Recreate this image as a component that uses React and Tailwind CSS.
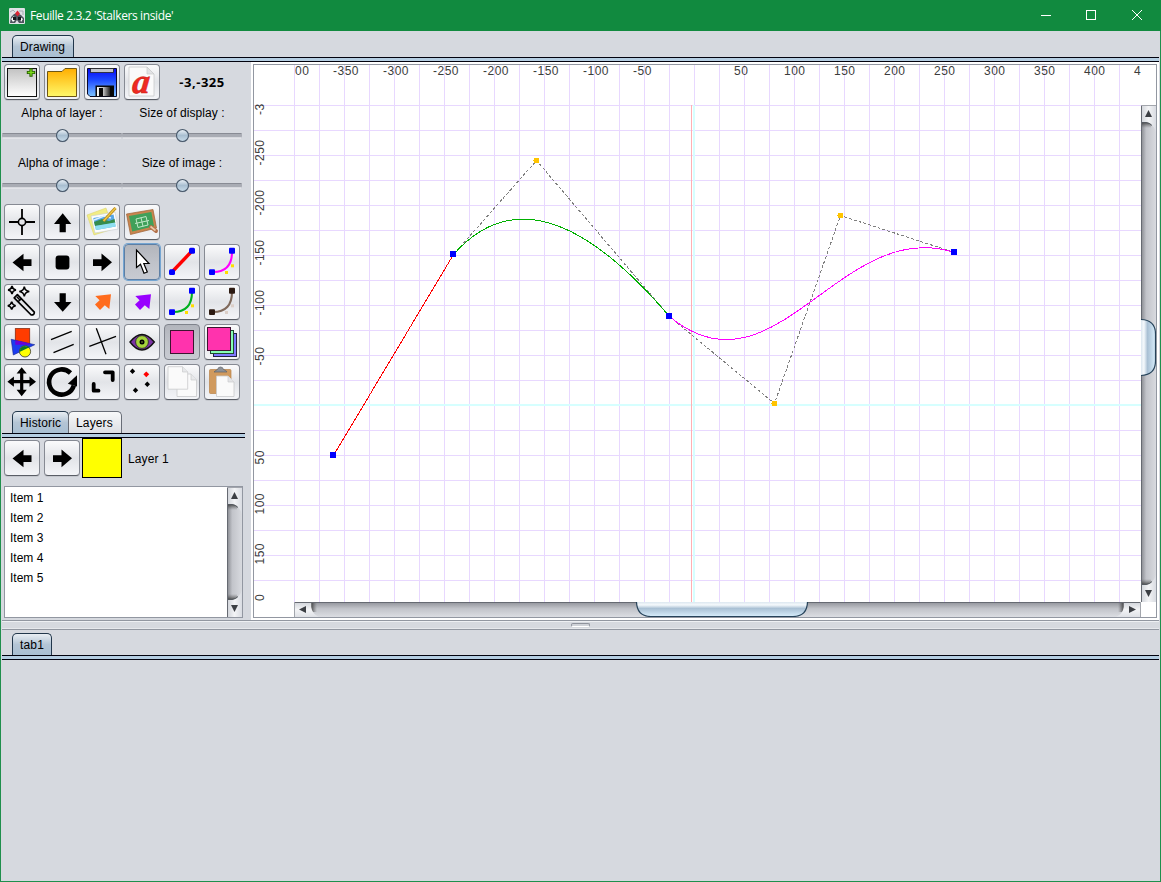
import React, { useId } from "react";

const BTN =
  "block h-[36px] w-[36px] rounded-[4px] border border-[#868a93] border-b-[#5a5e66] bg-linear-to-b from-[#fbfbfc] via-[#e2e4e8] to-[#f4f5f8] shadow-[0_1px_0_#c4c7cd]";
const BTN_ON =
  "block h-[36px] w-[36px] rounded-[4px] border border-[#7f838c] bg-linear-to-b from-[#b2b5bc] via-[#bfc2c9] to-[#c8cbd2]";
const BTN_FOCUS =
  "block h-[36px] w-[36px] rounded-[4px] border border-[#5d7fa5] bg-linear-to-b from-[#b2b5bc] via-[#bfc2c9] to-[#c8cbd2] shadow-[0_0_0_1px_#74a5d2]";

function ToolButton({ children, look = BTN, label }) {
  return (
    <div className="flex h-10 w-10 items-center justify-center">
      <button className={look} aria-label={label}>
        <svg viewBox="1 1 34 34" className="block h-[34px] w-[34px] overflow-visible" fill="none">
          {children}
        </svg>
      </button>
    </div>
  );
}

const page = { fill: "#fafafa", stroke: "#c9cacc", strokeWidth: 0.8 };
const LEFT = "M8.5 18.5 19.5 9.7V15.3H27.5V22H19.5V27.3Z";
const RIGHT = "M28 18.3 17.5 9.5V15.2H9V22H17.5V27.2Z";
const NE = "M27 10.3 11.3 12 15.6 16.3 11 20.5 16 26 20.8 21.2 25.3 25Z";

const star = (x, y, r) =>
  `M${x} ${y - r}Q${x + 0.6} ${y - 0.6} ${x + r} ${y}Q${x + 0.6} ${y + 0.6} ${x} ${y + r}Q${x - 0.6} ${y + 0.6} ${x - r} ${y}Q${x - 0.6} ${y - 0.6} ${x} ${y - r}Z`;

function Curve({ stroke, ends, dots }) {
  return (
    <>
      <path d="M28 8Q28 28 9 28" stroke={stroke} strokeWidth="2.1" />
      <rect x="25" y="3.8" width="6" height="6" rx="1" fill={ends} />
      <rect x="5" y="25.3" width="6" height="5.6" rx="1" fill={ends} />
      <rect x="27" y="20.3" width="3" height="3" fill={dots} />
      <rect x="21" y="27" width="3" height="3" fill={dots} />
    </>
  );
}

function FileButtons() {
  return (
    <>
      <ToolButton label="New">
        <defs>
          <linearGradient id="gNew" x2="0" y2="1"><stop stopColor="#c2c2c2" /><stop offset="1" stopColor="#fff" /></linearGradient>
          <linearGradient id="gOpen" x2="0" y2="1"><stop stopColor="#ffae00" /><stop offset="1" stopColor="#fff96a" /></linearGradient>
          <linearGradient id="gSave" x2="0" y2="1"><stop stopColor="#0808f4" /><stop offset=".4" stopColor="#1c48ff" /><stop offset="1" stopColor="#7cc4ff" /></linearGradient>
          <linearGradient id="gShut" x2="1" y2="0"><stop stopColor="#fff" /><stop offset=".5" stopColor="#bbb" /><stop offset="1" stopColor="#222" /></linearGradient>
        </defs>
        <rect x="3.5" y="4.5" width="29" height="28" fill="url(#gNew)" stroke="#111" />
        <path d="M27 4.3V12.7M22.8 8.5H31.2" stroke="#245c00" strokeWidth="3.2" />
        <path d="M27 5.2V11.8M23.7 8.5H30.3" stroke="#7edb1c" strokeWidth="1.4" />
      </ToolButton>
      <ToolButton label="Open">
        <path d="M3.5 32.5V7.5H18L21 4.5H32.5V32.5Z" fill="url(#gOpen)" stroke="#6e5614" />
      </ToolButton>
      <ToolButton label="Save">
        <path d="M3.5 4.5H32.5V32.5H6L3.5 30Z" fill="url(#gSave)" stroke="#0a0a28" />
        <rect x="6.5" y="4.5" width="23" height="4" fill="#c4c6cc" stroke="#222" strokeWidth=".8" />
        <rect x="11.5" y="21.5" width="18.5" height="11" fill="#080808" />
        <rect x="13" y="23" width="13" height="9" fill="url(#gShut)" />
        <rect x="15" y="24" width="4" height="8" fill="#090909" />
      </ToolButton>
      <ToolButton label="Export">
        <path d="M5 3H23L30 10V32H5Z" {...page} />
        <path d="M23 3V10H30Z" fill="#e2e3e5" stroke="#c9cacc" strokeWidth=".7" />
        <text transform="translate(7.5 28.5) skewX(-6) scale(1.12 1.12)" fontFamily="Liberation Serif, serif" fontStyle="italic" fontWeight="700" fontSize="31" fill="#ef2a22" stroke="#c81c16" strokeWidth=".5">a</text>
      </ToolButton>
    </>
  );
}

function ToolGrid() {
  return (
    <div className="grid grid-cols-[repeat(6,40px)]">
      <ToolButton label="Origin">
        <path d="M5 18H14M22 18H31M18 5V14M18 22V31" stroke="#000" strokeWidth="1.8" />
        <circle cx="18" cy="18" r="3.6" stroke="#000" strokeWidth="1.6" />
      </ToolButton>
      <ToolButton label="Up"><path d="M18.7 9.3 27.3 20H21.8V28.3H15.6V20H10Z" fill="#000" /></ToolButton>
      <ToolButton label="Image">
        <path d="M3 11 22 4 29 25 10 31Z" fill="#f1ec85" stroke="#d8d064" strokeWidth=".5" />
        <path d="M7 12 31 8 34 25 11 29Z" fill="#fdfdfd" stroke="#c6cbd2" strokeWidth=".6" />
        <path d="M9.3 14 29.6 10.5 31.6 22.5 12 26Z" fill="#57a6e8" />
        <path d="M10 18 18 15 25 17 30.5 15 31.3 19 11 22Z" fill="#358c4c" />
        <path d="M11 22 31 18.5 31.6 22.5 12 26Z" fill="#8edff0" />
        <path d="M10 16 20 12 27 14" stroke="#d9efff" strokeWidth="1.5" />
        <path d="M31.5 4 19.5 17" stroke="#b98716" strokeWidth="3" />
        <path d="M31.5 4 19.5 17" stroke="#f0c948" strokeWidth="1.3" />
      </ToolButton>
      <ToolButton label="Board">
        <path d="M2.5 10 29 5.5 32.5 24 6.5 30.5Z" fill="#c9854f" stroke="#9c6236" strokeWidth=".7" />
        <path d="M5 12 27.3 8 30 22.3 8.2 27.5Z" fill="#40a05a" />
        <path d="M12 15 22 12.5 24 21 14 23.5ZM17 13.7 19 22.3M11 19.5 25 16.5" stroke="#bfe8c8" strokeWidth="1" />
        <path d="M27 23 32 27" stroke="#b3704a" strokeWidth="4" strokeLinecap="round" />
        <path d="M26.5 22.5 31.5 26.5" stroke="#ecc9a8" strokeWidth="1.7" />
      </ToolButton>
      <div /><div />

      <ToolButton label="Left"><path d={LEFT} fill="#000" /></ToolButton>
      <ToolButton label="Center"><rect x="11.6" y="11.6" width="13.8" height="13.8" rx="3" fill="#000" /></ToolButton>
      <ToolButton label="Right"><path d={RIGHT} fill="#000" /></ToolButton>
      <ToolButton label="Select" look={BTN_FOCUS}>
        <path d="M12.5 6V23.5L16.5 20.2 20 29.2 23.3 28 19.8 19.5H25Z" fill="#fff" stroke="#000" strokeWidth="1.2" />
      </ToolButton>
      <ToolButton label="Line">
        <path d="M28 7 8 28" stroke="#f00" strokeWidth="3.4" />
        <rect x="25" y="3.8" width="6" height="6" rx="1.5" fill="#00f" />
        <rect x="5" y="25.3" width="6" height="5.6" rx="1.5" fill="#00f" />
      </ToolButton>
      <ToolButton label="Cubic curve"><Curve stroke="#f0f" ends="#00f" dots="#fd0" /></ToolButton>

      <ToolButton label="Wand">
        <path d={star(8, 6, 4)} stroke="#000" strokeWidth="1.5" />
        <path d={star(20.3, 7.5, 5)} stroke="#000" strokeWidth="1.6" />
        <path d={star(7.7, 21.7, 4)} stroke="#000" strokeWidth="1.5" />
        <path d="M10.2 13.8 13.4 10.6 30.3 28.2Q30.6 31 27.2 31Z" stroke="#000" strokeWidth="1.7" strokeLinejoin="round" />
        <path d="M14 17.8 17.5 14.6M12.8 12.8 16 16" stroke="#000" strokeWidth="1.5" />
      </ToolButton>
      <ToolButton label="Down"><path d="M18.7 27.7 27.5 18H21.8V9.3H15.6V18H10Z" fill="#000" /></ToolButton>
      <ToolButton label="Orange arrow"><path d={NE} fill="#ff6b1c" /></ToolButton>
      <ToolButton label="Purple arrow"><path d={NE} fill="#90f" /></ToolButton>
      <ToolButton label="Quadratic curve"><Curve stroke="#00b020" ends="#00f" dots="#fd0" /></ToolButton>
      <ToolButton label="Brown curve"><Curve stroke="#806a5c" ends="#2c1a12" dots="#dccfc8" /></ToolButton>

      <ToolButton label="Shapes">
        <rect x="11.3" y="4.6" width="14.4" height="16" fill="#ff3c00" stroke="#8c2a10" strokeWidth=".8" />
        <path d="M7.2 15.3 30.7 20.7 9.3 31Z" fill="#1c3cf0" stroke="#10208c" strokeWidth=".6" />
        <path d="M11.3 16.3 25.7 19.6V20.7H11.3Z" fill="#6a00d8" />
        <circle cx="21" cy="27.4" r="5.6" fill="#ff0" stroke="#333" strokeWidth=".8" />
        <path d="M15.5 28 16.5 24 20 22 26 23Z" fill="#0a7a28" />
      </ToolButton>
      <ToolButton label="Parallel"><path d="M7 15.7 27.7 7.3M9.5 28.7 29.7 20.3" stroke="#000" strokeWidth="1.3" /></ToolButton>
      <ToolButton label="Intersection"><path d="M5.3 22.3 32 12.3M12.3 4.3 22 30.3" stroke="#000" strokeWidth="1.3" /></ToolButton>
      <ToolButton label="View">
        <path d="M6 18Q12 10.5 18 10.5T30.3 18Q24 26 18 26T6 18Z" fill="#7b33a4" stroke="#111" strokeWidth="1.4" />
        <circle cx="18" cy="18" r="6.4" fill="#a5d33c" stroke="#222" strokeWidth=".8" />
        <circle cx="18" cy="18" r="2.5" fill="#000" />
        <circle cx="18" cy="18" r=".7" fill="#a5d33c" />
      </ToolButton>
      <ToolButton label="Layer" look={BTN_ON}><rect x="6.5" y="6.5" width="23" height="23" fill="#ff33ad" stroke="#3c1430" /></ToolButton>
      <ToolButton label="All layers">
        <rect x="9.5" y="9.5" width="23" height="23" fill="#8078ff" stroke="#222244" />
        <rect x="6.5" y="6.5" width="23" height="23" fill="#86ffb4" stroke="#1c4a30" />
        <rect x="3.5" y="3.5" width="23" height="23" fill="#ff33ad" stroke="#3c1430" />
      </ToolButton>

      <ToolButton label="Move">
        <path d="M17.7 3.2 22.8 9.6H19.3V16.1H25.5V12.6L32 17.7 25.5 22.8V19.3H19.3V25.8H22.8L17.7 32.2 12.6 25.8H16.1V19.3H9.9V22.8L3.4 17.7 9.9 12.6V16.1H16.1V9.6H12.6Z" fill="#000" />
      </ToolButton>
      <ToolButton label="Rotate">
        <path d="M26.5 9A12.6 12.6 0 1 0 29.8 21.5" stroke="#000" strokeWidth="4.6" />
        <path d="M33 11.2V22.5L23.8 19.8Z" fill="#000" />
      </ToolButton>
      <ToolButton label="Resize"><path d="M21 8.3H28.7V16M9.7 20V26.7H14.5" stroke="#000" strokeWidth="3.8" strokeLinecap="round" strokeLinejoin="round" /></ToolButton>
      <ToolButton label="Points">
        <path d="M8.5 4.6 11.2 7.3 8.5 10 5.8 7.3ZM23.3 17.6 26 20.3 23.3 23 20.6 20.3ZM11.5 23.6 14.2 26.3 11.5 29 8.8 26.3Z" fill="#000" />
        <path d="M22.3 7.4 25.2 10.3 22.3 13.2 19.4 10.3Z" fill="#f00" />
      </ToolButton>
      <ToolButton label="Copy">
        <path d="M13 10H27L32.5 16V32.5H13Z" {...page} />
        <path d="M27 10V16H32.5" fill="#e7e8ea" stroke="#c9cacc" strokeWidth=".7" />
        <path d="M4 2.7H18.5L23.7 8V25.2H4Z" {...page} />
        <path d="M18.5 2.7V8H23.7" fill="#e7e8ea" stroke="#c9cacc" strokeWidth=".7" />
      </ToolButton>
      <ToolButton label="Paste">
        <rect x="5.5" y="5.5" width="21.5" height="24" rx="1" fill="#d09a5e" stroke="#b98248" strokeWidth=".7" />
        <path d="M10 8Q12 6 13.5 5.5 14 3 16.5 3T19.5 5.5Q22 6 23 8Z" fill="#8d9196" stroke="#5e6267" strokeWidth=".7" />
        <path d="M12.5 12H24L30 18V32.5H12.5Z" {...page} />
        <path d="M24 12V18H30" fill="#e3e4e6" stroke="#c9cacc" strokeWidth=".7" />
      </ToolButton>
    </div>
  );
}

function Slider({ label }) {
  return (
    <div className="flex h-[50px] w-[120px] flex-col items-center">
      <div className="h-[23px] whitespace-nowrap text-[12px] leading-[23px] tracking-[0.08px]">{label}</div>
      <svg className="block h-[20px] w-[120px]" viewBox="0 0 120 20">
        <rect x="0" y="8" width="120" height="4.5" rx="1.5" fill="#a9acb4" />
        <path d="M.5 8.5H119.5" stroke="#888b94" />
        <path d="M1 13H119" stroke="#eff0f3" />
        <circle cx="60.5" cy="11" r="6.5" fill="#c2c5cc" />
        <circle cx="60.5" cy="10.5" r="6" fill="url(#knob)" stroke="#48596b" strokeWidth="1.1" />
      </svg>
    </div>
  );
}

function TabStrip({ tabs, height }) {
  return (
    <div className={`flex flex-col ${height}`}>
      <div className="flex flex-1 items-end pl-[10px]">
        {tabs.map((t) => (
          <div
            key={t.name}
            className={
              t.on
                ? `h-[22px] whitespace-nowrap rounded-t-[5px] border border-b-0 border-[#22374b] bg-linear-to-b from-[#e9eef3] via-[#b4c5d5] to-[#a9bfd2] pl-[7px] text-[12px] leading-[22px] tracking-[0.15px] ${t.size}`
                : `-ml-px h-[22px] whitespace-nowrap rounded-t-[5px] border border-b-0 border-[#686d77] bg-linear-to-b from-[#f8f9fa] to-[#dcdfe4] pl-[7px] text-[12px] leading-[22px] tracking-[0.15px] ${t.size}`
            }
          >
            {t.name}
          </div>
        ))}
      </div>
      <div className="h-[5px] shrink-0 border-y border-[#02020e] bg-[#b5cee2]" />
    </div>
  );
}

function VScroll({ length, thumb, className }) {
  const id = useId();
  return (
    <svg width="15" height={length} viewBox={`0 0 15 ${length}`} className={className}>
      <defs>
        <linearGradient id={id + "t"}><stop stopColor="#85878d" /><stop offset=".35" stopColor="#c2c4ca" /><stop offset="1" stopColor="#d8dadf" /></linearGradient>
        <linearGradient id={id + "b"}><stop stopColor="#cfd2d8" /><stop offset=".5" stopColor="#f3f4f6" /><stop offset="1" stopColor="#d9dce2" /></linearGradient>
        <linearGradient id={id + "h"}><stop stopColor="#dce7f0" /><stop offset=".2" stopColor="#f5f9fc" /><stop offset=".45" stopColor="#a9c0d4" /><stop offset="1" stopColor="#d8eefc" /></linearGradient>
        <linearGradient id={id + "s"} x2="0" y2="1"><stop stopColor="#222" stopOpacity=".8" /><stop offset="1" stopColor="#555" stopOpacity="0" /></linearGradient>
        <linearGradient id={id + "u"} x2="0" y2="1"><stop stopColor="#555" stopOpacity="0" /><stop offset="1" stopColor="#222" stopOpacity=".8" /></linearGradient>
      </defs>
      <rect width="15" height={length} fill={`url(#${id}t)`} />
      <rect y="17" width="10" height="6" fill={`url(#${id}s)`} />
      <rect y={length - 23} width="10" height="6" fill={`url(#${id}u)`} />
      <path d="M0 0H15V27Q12 18 5 17.3H0Z" fill={`url(#${id}b)`} />
      <path d={`M0 ${length}H15V${length - 27}Q12 ${length - 18} 5 ${length - 17.3}H0Z`} fill={`url(#${id}b)`} />
      <path d={`M.5 0V${length}`} stroke="#666a72" />
      <path d="M0 .5H15" stroke="#a3a6ad" />
      <path d="M1 17.5H5Q9 18 11 20.5" stroke="#555a60" fill="none" />
      <path d={`M1 ${length - 17.5}H5Q9 ${length - 18} 11 ${length - 20.5}`} stroke="#555a60" fill="none" />
      <path d="M4 12 7.5 5 11 12Z" fill="#3c3f44" />
      <path d={`M4 ${length - 12} 7.5 ${length - 5} 11 ${length - 12}Z`} fill="#3c3f44" />
      {thumb && (
        <path d={`M0 ${thumb[0] + 0.5}Q14.5 ${thumb[0] + 1} 14.5 ${thumb[0] + 15}V${thumb[1] - 15}Q14.5 ${thumb[1] - 1} 0 ${thumb[1] - 0.5}`} fill={`url(#${id}h)`} stroke="#26435a" strokeWidth="1.2" />
      )}
    </svg>
  );
}

function HScroll({ length, thumb }) {
  return (
    <svg width={length} height="15" viewBox={`0 0 ${length} 15`} className="block shrink-0">
      <defs>
        <linearGradient id="hsT" x2="0" y2="1"><stop stopColor="#909299" /><stop offset=".45" stopColor="#c2c4ca" /><stop offset="1" stopColor="#dbdde2" /></linearGradient>
        <linearGradient id="hsB" x2="0" y2="1"><stop stopColor="#cfd2d8" /><stop offset=".5" stopColor="#f3f4f6" /><stop offset="1" stopColor="#dfe1e6" /></linearGradient>
        <linearGradient id="hsH" x2="0" y2="1"><stop stopColor="#dce7f0" /><stop offset=".2" stopColor="#f5f9fc" /><stop offset=".45" stopColor="#a9c0d4" /><stop offset="1" stopColor="#d8eefc" /></linearGradient>
        <linearGradient id="hsL"><stop stopColor="#222" stopOpacity=".8" /><stop offset="1" stopColor="#555" stopOpacity="0" /></linearGradient>
        <linearGradient id="hsR"><stop stopColor="#555" stopOpacity="0" /><stop offset="1" stopColor="#222" stopOpacity=".8" /></linearGradient>
      </defs>
      <rect width={length} height="15" fill="url(#hsT)" />
      <rect x="17" width="6" height="10" fill="url(#hsL)" />
      <rect x={length - 23} width="6" height="10" fill="url(#hsR)" />
      <path d="M0 0V15H25Q18 12 17.3 5V0Z" fill="url(#hsB)" />
      <path d={`M${length} 0V15H${length - 25}Q${length - 18} 12 ${length - 17.3} 5V0Z`} fill="url(#hsB)" />
      <path d={`M0 .5H${length}`} stroke="#666a72" />
      <path d={`M.5 0V15M${length - 0.5} 0V15`} stroke="#a3a6ad" />
      <path d="M12 4 5 7.5 12 11Z" fill="#3c3f44" />
      <path d={`M${length - 12} 4 ${length - 5} 7.5 ${length - 12} 11Z`} fill="#3c3f44" />
      <path d={`M${thumb[0] + 0.5} 0Q${thumb[0] + 1} 14.5 ${thumb[0] + 15} 14.5H${thumb[1] - 15}Q${thumb[1] - 1} 14.5 ${thumb[1] - 0.5} 0`} fill="url(#hsH)" stroke="#26435a" strokeWidth="1.2" />
    </svg>
  );
}

const TOP_LABELS = [
  ["00", 295], ["-350", 333], ["-300", 383], ["-250", 433], ["-200", 483], ["-150", 533], ["-100", 583], ["-50", 633],
  ["50", 734], ["100", 784], ["150", 834], ["200", 884], ["250", 934], ["300", 984], ["350", 1034], ["400", 1084], ["4", 1134],
];
const SIDE_LABELS = [
  ["-3", 115], ["-250", 165.5], ["-200", 215.5], ["-150", 265.5], ["-100", 315.5], ["-50", 365.5],
  ["50", 464.5], ["100", 514.5], ["150", 564.5], ["0", 601],
];
const COLS = Array.from({ length: 34 }, (_, i) => 294 + i * 25);
const ROWS = Array.from({ length: 20 }, (_, i) => 105 + i * 25);

function Sheet() {
  return (
    <svg width="887" height="537" viewBox="254 65 887 537" className="block" shapeRendering="crispEdges" fill="none">
      {COLS.map((x) => <rect key={x} x={x} y="65" width="1" height="537" fill="#e8d8ff" />)}
      {ROWS.map((y) => <rect key={y} x="254" y={y} width="887" height="1" fill="#e8d8ff" />)}
      <rect x="254" y="404" width="887" height="2" fill="#d6ffff" />
      <rect x="693" y="105" width="2" height="497" fill="#d6ffff" />
      <rect x="691" y="105" width="1" height="497" fill="#ffb0b4" />
      <g fontFamily="Liberation Sans, Arial, sans-serif" fontSize="12" letterSpacing=".5" fill="#3c3c3c">
        {TOP_LABELS.map(([t, x]) => <text key={x} x={x} y="75">{t}</text>)}
        {SIDE_LABELS.map(([t, y]) => <text key={y} transform={`translate(264 ${y}) rotate(-90)`}>{t}</text>)}
      </g>
      <path d="M453.5 254.5 536.5 160.5 669.5 316.5 774.5 403.5 840.5 215.5 954.5 252.5" stroke="#808080" strokeDasharray="3 2" />
      <path d="M333.5 455.5 453.5 254.5" stroke="#f00" />
      <path d="M453.5 254.5Q536.5 160.5 669.5 316.5" stroke="#00b000" />
      <path d="M669.5 316.5C774.5 403.5 840.5 215.5 954.5 252.5" stroke="#f0f" />
      {[[536, 160], [774, 403], [840, 215]].map(([x, y]) => (
        <g key={x} fill="#ffc400"><rect x={x - 2} y={y - 2} width="5" height="5" /><rect x={x - 3} y={y} width="1" height="1" /></g>
      ))}
      {[[333, 455], [453, 254], [669, 316], [954, 252]].map(([x, y]) => (
        <rect key={x} x={x - 3} y={y - 3} width="6" height="6" fill="#00f" />
      ))}
    </svg>
  );
}

function TitleBar() {
  return (
    <div className="flex h-[31px] shrink-0 items-center bg-[#118a3f] text-white">
      <svg viewBox="0 0 16 16" className="ml-[9px] h-4 w-4">
        <rect width="16" height="16" rx="1" fill="#dfe2e6" />
        <path d="M1 15 2 9 5 6 8 5 12 7 15 10V15H10L8 12 6 15Z" fill="#4d545d" />
        <path d="M2 11 5 8 6 12 4 14ZM11 9 14 11 12 14Z" fill="#fff" />
        <path d="M1 4 4 2 6 4M10 3H14V7" stroke="#a5abb3" fill="none" />
        <path d="M8.5 2.5 11 5.5 8.5 8.5 6 5.5Z" fill="#db2434" />
        <path d="M4 9H7V12H4ZM9 9H12V12H9Z" fill="#14181c" />
      </svg>
      <div className="ml-[5px] whitespace-nowrap font-['Open_Sans','Noto_Sans',sans-serif] text-[12px] leading-4 tracking-[-0.38px]">
        Feuille 2.3.2 'Stalkers inside'
      </div>
      <svg viewBox="0 0 120 31" className="ml-auto mr-[10px] h-[31px] w-[120px]" fill="none" stroke="#fff">
        <path d="M10 15.5H20" />
        <rect x="55.5" y="10.5" width="9" height="9" />
        <path d="M101 10 111 20M111 10 101 20" />
      </svg>
    </div>
  );
}

function LeftPanel() {
  return (
    <div className="flex w-[249px] shrink-0 flex-col">
      <div className="flex h-10 items-center">
        <FileButtons />
        <div className="w-20 whitespace-nowrap text-center font-['Open_Sans','Noto_Sans',sans-serif] text-[13px] font-bold leading-4 tracking-[0.55px]">-3,-325</div>
      </div>
      <div className="grid grid-cols-[120px_120px]">
        <Slider label="Alpha of layer :" />
        <Slider label="Size of display :" />
        <Slider label="Alpha of image :" />
        <Slider label="Size of image :" />
      </div>
      <ToolGrid />
      <div className="w-[243px]">
        <TabStrip height="h-[36px]" tabs={[{ name: "Historic", on: true, size: "w-[57px]" }, { name: "Layers", on: false, size: "w-[54px]" }]} />
      </div>
      <div className="flex h-10 items-center">
        <ToolButton label="Previous"><path d={LEFT} fill="#000" /></ToolButton>
        <ToolButton label="Next"><path d={RIGHT} fill="#000" /></ToolButton>
        <div className="h-10 w-10 border border-black bg-[#ff0]" />
        <div className="ml-[6px] pt-[2px] text-[12px] leading-4 tracking-[0.1px]">Layer 1</div>
      </div>
      <div className="ml-[2px] mt-[8px] flex h-[132px] w-[239px] border border-[#9297a1] bg-white">
        <ul className="flex-1 pl-[5px] pt-[1px] text-[12px] leading-5">
          <li>Item 1</li>
          <li>Item 2</li>
          <li>Item 3</li>
          <li>Item 4</li>
          <li>Item 5</li>
        </ul>
        <VScroll length={130} className="block" />
      </div>
    </div>
  );
}

export default function App() {
  return (
    <div className="flex h-[882px] w-[1161px] flex-col overflow-hidden bg-[#d6d9df] font-['Liberation_Sans',Arial,sans-serif] text-black">
      <svg className="absolute h-0 w-0">
        <linearGradient id="knob" x2="0" y2="1"><stop stopColor="#eef3f8" /><stop offset=".5" stopColor="#a9bfd1" /><stop offset="1" stopColor="#c9dcea" /></linearGradient>
      </svg>
      <TitleBar />
      <div className="flex flex-1 flex-col border-x border-b border-[#1f8f4c] pl-px pr-px">
        <TabStrip height="h-[31px] shrink-0" tabs={[{ name: "Drawing", on: true, size: "w-[62px]" }]} />
        <div className="flex h-[558px] shrink-0">
          <LeftPanel />
          <div className="flex-1 bg-white pl-[2px] pt-[2px]">
            <div className="flex h-[554px] w-[904px] flex-col border border-[#9297a1]">
              <div className="flex">
                <Sheet />
                <div className="flex w-[15px] flex-col pt-[40px]">
                  <VScroll length={497} thumb={[214, 271]} className="block" />
                </div>
              </div>
              <div className="flex pl-[40px]">
                <HScroll length={847} thumb={[342, 514]} />
              </div>
            </div>
          </div>
        </div>
        <div className="flex h-[10px] shrink-0 items-center justify-center border-y border-[#9297a1] bg-[#d6d9df] shadow-[inset_0_1px_0_#eef0f3,inset_0_-1px_0_#e6e8ec]">
          <div className="h-[4px] w-[19px] rounded-[2px] border border-[#8f939c] border-b-white bg-[#cfd2d8]" />
        </div>
        <TabStrip height="h-[30px] shrink-0" tabs={[{ name: "tab1", on: true, size: "w-[40px]" }]} />
        <div className="flex-1" />
      </div>
    </div>
  );
}
